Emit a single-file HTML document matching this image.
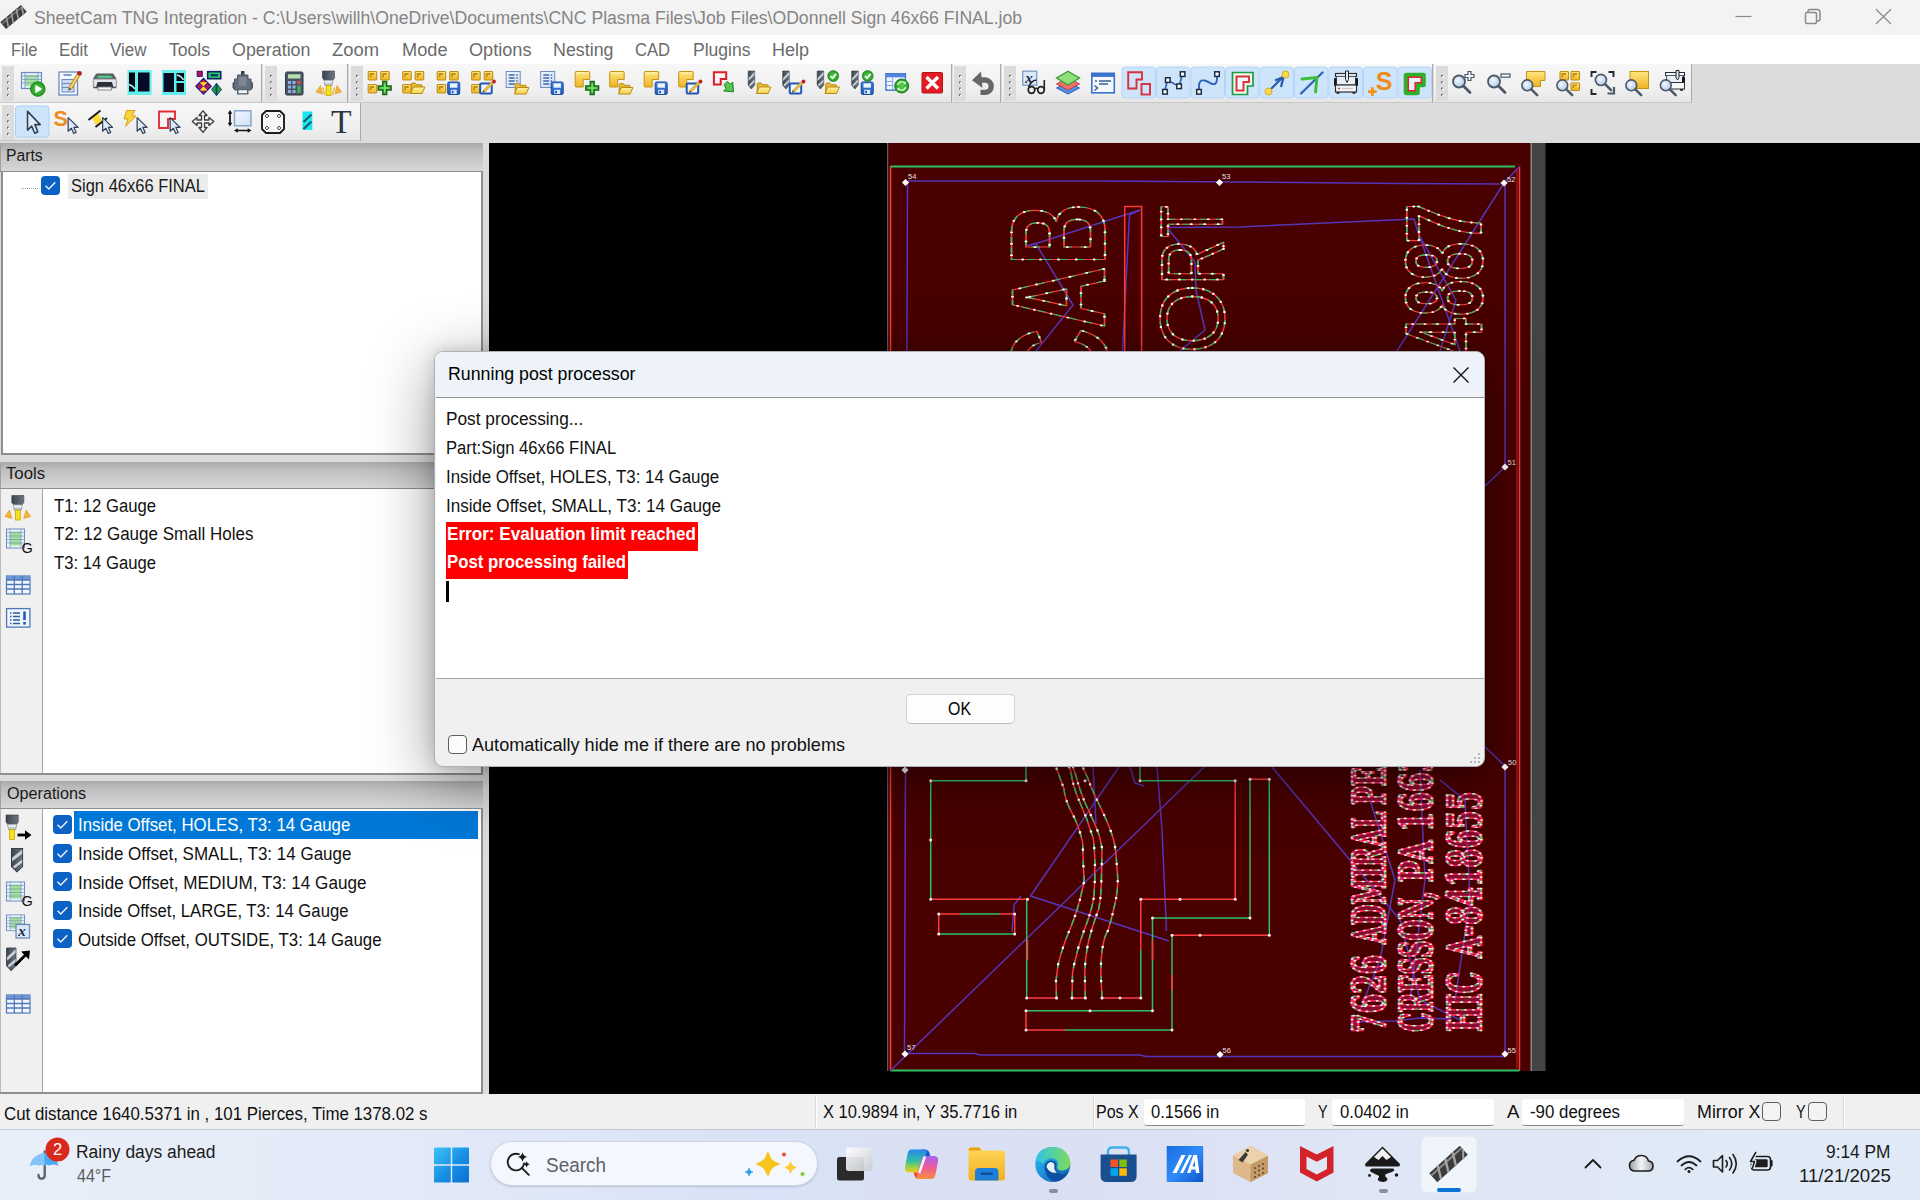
<!DOCTYPE html>
<html lang="en"><head><meta charset="utf-8"><title>SheetCam TNG Integration</title>
<style>
*{box-sizing:border-box;margin:0;padding:0}
html,body{width:1920px;height:1200px;overflow:hidden;background:#dcdcdc;font-family:"Liberation Sans",sans-serif;color:#111}
.abs{position:absolute}
.t{position:absolute;white-space:nowrap;line-height:1;transform-origin:0 0}
#titlebar{left:0;top:0;width:1920px;height:35px;background:#f3f3f3}
#menubar{left:0;top:35px;width:1920px;height:29px;background:#fff}
.tb{position:absolute;background:linear-gradient(#f7f7f7,#efefef 70%,#e6e6e6);border-right:1px solid #a9a9a9;border-bottom:1px solid #c9c9c9}
.ph{position:absolute;left:0;width:483px;background:linear-gradient(#aaaaaa,#bfbfbf 30%,#d7d7d7);border-left:1px solid #a0a0a0;border-bottom:1px solid #8e8e8e}
.pb{position:absolute;background:#fff;border:2px solid #8f8f8f;border-top:none}
.strip{position:absolute;left:0;width:43px;background:#f0f0f0;border-right:1px solid #a8a8a8;border-left:1px solid #bbb}
.cb{position:absolute;width:19px;height:19px;border-radius:4px;background:#0b62c4}
.cb svg{position:absolute;left:0;top:0}
</style></head><body>
<div id="titlebar" class="abs"></div>
<div id="menubar" class="abs"></div>
<!-- toolbar backgrounds -->
<div class="tb" style="left:0;top:64px;width:262px;height:39px"></div>
<div class="tb" style="left:263px;top:64px;width:85px;height:39px"></div>
<div class="tb" style="left:349px;top:64px;width:603px;height:39px"></div>
<div class="tb" style="left:953px;top:64px;width:48px;height:39px"></div>
<div class="tb" style="left:1002px;top:64px;width:431px;height:39px"></div>
<div class="tb" style="left:1434px;top:64px;width:258px;height:39px"></div>
<div class="tb" style="left:0;top:103px;width:361px;height:38px"></div>
<!-- window controls -->
<svg class="abs" style="left:1730px;top:0" width="190" height="35" viewBox="0 0 190 35" fill="none" stroke="#8a8a8a" stroke-width="1.2">
<path d="M5.500 16.500H21.500"/>
<rect x="75.500" y="12.500" width="11" height="11" rx="1.500" stroke-width="1.500"/><path d="M78 12.500V11.500A2 2 0 0 1 80 9.500H87A3 3 0 0 1 90 12.500V19A2 2 0 0 1 88 21H86.500" stroke-width="1.500"/>
<path d="M146 9.300L161 24M161 9.300L146 24"/>
</svg>
<!-- app icon -->
<svg class="abs" style="left:0;top:4px" width="28" height="27" viewBox="0 0 28 27">
<g transform="rotate(-40 13.500 13)"><rect x="0" y="8.500" width="27" height="9" fill="#3a3a3a"/><path d="M0 10.800h27" stroke="#7c7c7c" stroke-width="1.400"/><path d="M3 17.500l5-9M9.500 17.500l5-9M16 17.500l5-9M22.500 17.500l4-7" stroke="#9a9a9a" stroke-width="1.800"/></g>
</svg>
<!-- canvas -->
<div class="abs" style="left:489px;top:143px;width:1431px;height:951px;background:#000"></div>
<!-- Parts -->
<div class="ph" style="top:143px;height:29px"></div>
<div class="pb" style="left:1px;top:172px;width:481.500px;height:282.500px"></div>
<div class="abs" style="left:68px;top:174px;width:140px;height:25px;background:#ececec"></div>
<div class="abs" style="left:21px;top:188px;width:17px;height:1px;background:repeating-linear-gradient(90deg,#a0a0a0 0 1px,transparent 1px 2px)"></div>
<div class="cb" style="left:41px;top:176px"><svg width="19" height="19" viewBox="0 0 19 19"><path d="M4.500 9.800L7.800 13L14.300 6.300" fill="none" stroke="#e8f1fb" stroke-width="1.500"/></svg></div>
<!-- Tools -->
<div class="ph" style="top:462px;height:27px"></div>
<div class="pb" style="left:0;top:489px;width:482.500px;height:285.500px;border-left:none"></div>
<div class="strip" style="top:489px;height:284px"></div>
<!-- Operations -->
<div class="ph" style="top:781px;height:28px"></div>
<div class="pb" style="left:0;top:809px;width:482.500px;height:284.500px;border-left:none"></div>
<div class="strip" style="top:809px;height:283px"></div>
<div class="abs" style="left:74px;top:811px;width:404px;height:28px;background:#0078d7"></div>
<div class="cb" style="left:53px;top:815px"><svg width="19" height="19" viewBox="0 0 19 19"><path d="M4.500 9.800L7.800 13L14.300 6.300" fill="none" stroke="#e8f1fb" stroke-width="1.500"/></svg></div>
<div class="cb" style="left:53px;top:844px"><svg width="19" height="19" viewBox="0 0 19 19"><path d="M4.500 9.800L7.800 13L14.300 6.300" fill="none" stroke="#e8f1fb" stroke-width="1.500"/></svg></div>
<div class="cb" style="left:53px;top:872px"><svg width="19" height="19" viewBox="0 0 19 19"><path d="M4.500 9.800L7.800 13L14.300 6.300" fill="none" stroke="#e8f1fb" stroke-width="1.500"/></svg></div>
<div class="cb" style="left:53px;top:901px"><svg width="19" height="19" viewBox="0 0 19 19"><path d="M4.500 9.800L7.800 13L14.300 6.300" fill="none" stroke="#e8f1fb" stroke-width="1.500"/></svg></div>
<div class="cb" style="left:53px;top:929px"><svg width="19" height="19" viewBox="0 0 19 19"><path d="M4.500 9.800L7.800 13L14.300 6.300" fill="none" stroke="#e8f1fb" stroke-width="1.500"/></svg></div>
<!-- status bar -->
<div class="abs" style="left:0;top:1094px;width:1920px;height:35px;background:#f0f0f0"></div>
<div class="abs" style="left:816px;top:1096px;width:1px;height:31px;background:#fff;box-shadow:-1px 0 0 #d8d8d8"></div>
<div class="abs" style="left:1094px;top:1096px;width:1px;height:31px;background:#fff;box-shadow:-1px 0 0 #d8d8d8"></div>
<div class="abs" style="left:1844px;top:1096px;width:1px;height:31px;background:#fff;box-shadow:-1px 0 0 #d8d8d8"></div>
<div class="abs" style="left:1144px;top:1099px;width:161px;height:27px;background:#fff;border-bottom:1px solid #8a8a8a;border-radius:3px"></div>
<div class="abs" style="left:1332px;top:1099px;width:162px;height:27px;background:#fff;border-bottom:1px solid #8a8a8a;border-radius:3px"></div>
<div class="abs" style="left:1522px;top:1099px;width:162px;height:27px;background:#fff;border-bottom:1px solid #8a8a8a;border-radius:3px"></div>
<div class="abs" style="left:1762px;top:1102px;width:19px;height:19px;background:#f3f3f3;border:1px solid #5e5e5e;border-radius:4px"></div>
<div class="abs" style="left:1808px;top:1102px;width:19px;height:19px;background:#f3f3f3;border:1px solid #5e5e5e;border-radius:4px"></div>
<!-- taskbar -->
<div class="abs" style="left:0;top:1129px;width:1920px;height:71px;background:linear-gradient(90deg,#e9eff9 0%,#e2eaf8 22%,#d9e2f6 40%,#dbdff3 55%,#dfe6f5 72%,#e1ebf7 100%);border-top:1px solid #c3c9d3"></div>
<div class="abs" style="left:490px;top:1141px;width:328px;height:45px;border-radius:23px;background:#f4f7fd;border:1px solid #cfd6e4;box-shadow:0 1px 2px rgba(80,90,120,.25)"></div>
<div class="abs" style="left:1421px;top:1136px;width:56px;height:57px;border-radius:6px;background:#f0f4fb;border:1px solid #e6ebf4"></div>
<div class="abs" style="left:1437px;top:1188px;width:24px;height:4px;border-radius:2px;background:#0a74d4"></div>
<div class="abs" style="left:1048.500px;top:1188.500px;width:9px;height:4px;border-radius:2px;background:#8b8f97"></div>
<div class="abs" style="left:1378.500px;top:1188.500px;width:9px;height:4px;border-radius:2px;background:#8b8f97"></div>
<!-- CAD canvas -->
<svg class="abs" style="left:489px;top:143px" width="1431" height="951" viewBox="489 143 1431 951">
<defs>
<g id="mk"><path d="M-3.600 0L0 -3.600L3.600 0L0 3.600Z" fill="#fff"/></g>
</defs>
<rect x="887" y="143" width="644" height="928" fill="#480000"/>
<rect x="887" y="143" width="1.200" height="928" fill="#6a5a5a"/>
<rect x="1530.500" y="143" width="1.500" height="928" fill="#8a8484"/>
<rect x="1532" y="143" width="13.500" height="928" fill="#444"/>
<!-- outside contour -->
<g fill="none" stroke-width="1.500">
<path d="M890.500 166.500V1070.500" stroke="#ff3a3a"/>
<path d="M1519.500 166.500V1070.500" stroke="#ff3a3a"/>
<path d="M1517 170V1068" stroke="#c02828" stroke-width="1"/>
<path d="M890.500 166.500H1515" stroke="#2fbf63" stroke-width="1.800"/>
<path d="M890.500 1070.500H1519.500" stroke="#2fbf63" stroke-width="1.800"/>
</g>
<!-- rapids (blue) -->
<g fill="none" stroke="#5535b8" stroke-width="1.500" stroke-linejoin="round">
<path d="M907.500 181H1100L1240 182L1400 183.500L1500 184"/>
<path d="M907.500 181L904.500 1054"/>
<path d="M1505 184V467L1485 486"/>
<path d="M1485 747L1505 766V1054"/>
<path d="M905 1053.500H975L980 1055H1140L1146 1056.500H1505"/>
<path d="M1519.500 166.500L1504 183L1397 351"/>
<path d="M1167 227.500L1240 227L1414 219L1418 232L1460 351"/>
<path d="M1419 235L1456 300L1440 351"/>
<path d="M1140 210L1041 242L1028 245.500L1036 244L1073 305L1036 351"/>
<path d="M1140 210L1129.500 215L1122.500 351"/>
<path d="M1167 227.500L1195 262L1196 290L1205 330L1180 351"/>
<!-- bottom -->
<path d="M890.500 1070.500L1204 767"/>
<path d="M1030.500 896L1119 767"/>
<path d="M1030.500 896L1169 941"/>
<path d="M1157 767L1162 830L1166.500 931"/>
<path d="M1093 767L1096 824"/>
<path d="M1130 767L1135 783L1144 786"/>
<path d="M1272 767L1350 860L1400 920L1420 1000L1460 1020"/>
<path d="M1012 932L1014 905L1021 896"/>
<path d="M1355 1022L1395 1021L1420 1018L1452 1019"/>
<path d="M1370 800L1395 880L1380 960L1360 1010"/>
<path d="M1420 770L1425 880L1410 1000"/>
<path d="M1440 780L1465 800L1470 900L1455 1000"/>
</g>
<!-- logo shapes -->
<g fill="none" stroke-width="1.500" stroke-linejoin="round">
<g stroke="#2fbf63">
<path d="M1026 767V780.800H930.700V899.200"/>
<path d="M1026.700 899.200V998"/>
<path d="M1235.200 780.800H1140V767"/>
<path d="M938.700 934H1014.700"/>
<path d="M960 914H1000"/>
<path d="M1250 779.200V918H1152.500V1010.700H1026"/>
<path d="M1269.300 779.200V935.200"/>
<path d="M1172 935.200V1030H1065"/>
<path d="M1140.800 998V950"/>
</g>
<g stroke="#ff3a3a">
<path d="M930.700 899.200H1027.500"/>
<path d="M1026.700 998H1056.500M1072 998H1085.300M1102 998H1140.800"/>
<path d="M1140.800 950V899.200H1235.200V780.800"/>
<path d="M938.700 934V914H960M1000 914H1014.700V934"/>
<path d="M1250 779.200H1269.300"/>
<path d="M1269.300 935.200H1172"/>
<path d="M1065 1030H1026V1010.700"/>
<path d="M1027.500 940V960M1152.500 940V960M1172 975V990"/>
</g>
<!-- wavy curves -->
<defs><g id="waves">
<path id="w1" d="M1056.500 998L1056 981L1058 965Q1062 948 1070 929T1082 890.700Q1084.500 882 1084 877T1082.700 842.700Q1079 826 1072 813T1064 789L1056 767"/>
<path id="w2" d="M1072 998L1072.500 973L1074 965Q1078 946 1085 928T1094 896Q1095.500 875 1094.700 856T1092 834.700Q1087 818 1080 802.700T1070.700 770.700L1069 767"/>
<path id="w3" d="M1085.300 998L1084.800 973Q1085 958 1088 944T1098.700 909Q1100.500 900 1101 890.700T1102 848Q1100 836 1096 826.700T1085 802.700Q1079 788 1076 776L1073 767"/>
<path id="w4" d="M1102 998L1100.800 973Q1100.800 958 1102.700 946.700T1108 930.700Q1113 914 1116 898.700T1116.800 866.700Q1116.500 855 1114.700 845T1106.700 821Q1102 810 1097 800T1088 778.700L1082.700 767"/>
</g></defs>
<use href="#waves" stroke="#ff3a3a"/>
<use href="#waves" stroke="#2fbf63" stroke-dasharray="7 8"/>
<use href="#waves" stroke="#fff" stroke-width="2.600" stroke-linecap="round" stroke-dasharray="0 17"/>
</g>
<g fill="#ffe6f0"><circle cx="930.7" cy="780.8" r="1.500"/><circle cx="930.7" cy="899.2" r="1.500"/><circle cx="1027.5" cy="899.2" r="1.500"/><circle cx="1026.7" cy="998" r="1.500"/><circle cx="1056.5" cy="998" r="1.500"/><circle cx="1072" cy="998" r="1.500"/><circle cx="1085.3" cy="998" r="1.500"/><circle cx="1102" cy="998" r="1.500"/><circle cx="1140.8" cy="998" r="1.500"/><circle cx="1140.8" cy="899.2" r="1.500"/><circle cx="1235.2" cy="899.2" r="1.500"/><circle cx="1235.2" cy="780.8" r="1.500"/><circle cx="1140" cy="780.8" r="1.500"/><circle cx="1026" cy="780.8" r="1.500"/><circle cx="938.7" cy="914" r="1.500"/><circle cx="1014.7" cy="914" r="1.500"/><circle cx="1014.7" cy="934" r="1.500"/><circle cx="938.7" cy="934" r="1.500"/><circle cx="1250" cy="779.2" r="1.500"/><circle cx="1269.3" cy="779.2" r="1.500"/><circle cx="1269.3" cy="935.2" r="1.500"/><circle cx="1172" cy="935.2" r="1.500"/><circle cx="1172" cy="1030" r="1.500"/><circle cx="1026" cy="1030" r="1.500"/><circle cx="1026" cy="1010.7" r="1.500"/><circle cx="1152.5" cy="1010.7" r="1.500"/><circle cx="1152.5" cy="918" r="1.500"/><circle cx="1250" cy="918" r="1.500"/><circle cx="930.7" cy="840" r="1.500"/><circle cx="1120" cy="998" r="1.500"/><circle cx="1090" cy="1010.7" r="1.500"/><circle cx="1200" cy="935.2" r="1.500"/><circle cx="1085" cy="780.8" r="1.500"/><circle cx="1180" cy="899.2" r="1.500"/></g>
<!-- sign lettering (rotated text outlines) -->
<defs>
<g id="bigtxt" font-family="'Liberation Sans',sans-serif" font-weight="bold" font-size="100">
<text vector-effect="non-scaling-stroke" transform="translate(1105.0 260.0) rotate(-90) scale(0.8613 1.3478)" x="-6.00" y="0">B</text>
<text vector-effect="non-scaling-stroke" transform="translate(1105.0 326.6) rotate(-90) scale(0.8559 1.3286)" x="-2.00" y="0">A</text>
<text vector-effect="non-scaling-stroke" transform="translate(1106.5 388.0) rotate(-90) scale(0.8788 1.3714)" x="-4.00" y="0">C</text>
</g>
<g id="midtxt" font-family="'Liberation Sans',sans-serif" font-weight="normal" font-size="100">
<text vector-effect="non-scaling-stroke" transform="translate(1223.0 236.6) rotate(-90) scale(0.5263 0.8986)" x="-2.00" y="0">T</text>
<text vector-effect="non-scaling-stroke" transform="translate(1223.0 279.7) rotate(-90) scale(0.6283 0.8857)" x="-8.00" y="0">R</text>
<text vector-effect="non-scaling-stroke" transform="translate(1224.0 350.0) rotate(-90) scale(0.8986 0.9143)" x="-4.00" y="0">O</text>
<text vector-effect="non-scaling-stroke" transform="translate(1223.0 392.0) rotate(-90) scale(0.6667 0.8986)" x="-8.00" y="0">P</text>
</g>
<g id="numtxt" font-family="'Liberation Sans',sans-serif" font-weight="bold" font-size="100">
<text vector-effect="non-scaling-stroke" transform="translate(1481.0 240.9) rotate(-90) scale(0.7271 1.0714)" x="-4.00" y="0">7</text>
<text vector-effect="non-scaling-stroke" transform="translate(1482.0 278.5) rotate(-90) scale(0.6980 1.1000)" x="-3.00" y="0">8</text>
<text vector-effect="non-scaling-stroke" transform="translate(1482.0 314.2) rotate(-90) scale(0.6600 1.1000)" x="-3.00" y="0">8</text>
<text vector-effect="non-scaling-stroke" transform="translate(1481.0 352.0) rotate(-90) scale(0.6200 1.0870)" x="-1.00" y="0">4</text>
</g>
<g id="smalltxt" font-family="'DejaVu Serif','Liberation Serif',serif" font-weight="bold" font-size="100">
<text vector-effect="non-scaling-stroke" transform="translate(1385.0 1030.7) rotate(-90) scale(0.2800 0.4521)" x="-7.00" y="0">7626</text>
<text vector-effect="non-scaling-stroke" transform="translate(1385.0 944.0) rotate(-90) scale(0.2389 0.4521)" x="1.00" y="0">ADMIRAL</text>
<text vector-effect="non-scaling-stroke" transform="translate(1385.0 804.0) rotate(-90) scale(0.2487 0.4521)" x="-4.00" y="0">PEARY</text>
<text vector-effect="non-scaling-stroke" transform="translate(1432.0 1030.7) rotate(-90) scale(0.2394 0.4562)" x="-4.00" y="0">CRESSON,</text>
<text vector-effect="non-scaling-stroke" transform="translate(1432.0 881.0) rotate(-90) scale(0.2869 0.4562)" x="-4.00" y="0">PA</text>
<text vector-effect="non-scaling-stroke" transform="translate(1432.0 828.0) rotate(-90) scale(0.2837 0.4562)" x="-12.00" y="0">16630</text>
<text vector-effect="non-scaling-stroke" transform="translate(1481.0 1030.7) rotate(-90) scale(0.2718 0.4699)" x="-4.00" y="0">HIC</text>
<text vector-effect="non-scaling-stroke" transform="translate(1481.0 958.0) rotate(-90) scale(0.2747 0.4699)" x="1.00" y="0">A-8418655</text>
</g>
</defs>
<g fill="none" stroke-width="1.400" stroke-linejoin="round">
<g style="vector-effect:non-scaling-stroke">
<use href="#bigtxt" stroke="#ff3a3a"/><use href="#bigtxt" stroke="#2fbf63" stroke-dasharray="7 7"/><use href="#bigtxt" stroke="#fff" stroke-width="2.400" stroke-linecap="round" stroke-dasharray="0 15"/>
<use href="#midtxt" stroke="#ff3a3a"/><use href="#midtxt" stroke="#2fbf63" stroke-dasharray="6 7"/><use href="#midtxt" stroke="#fff" stroke-width="2.400" stroke-linecap="round" stroke-dasharray="0 11"/>
<use href="#numtxt" stroke="#ff3a3a"/><use href="#numtxt" stroke="#2fbf63" stroke-dasharray="6 7"/><use href="#numtxt" stroke="#fff" stroke-width="2.400" stroke-linecap="round" stroke-dasharray="0 10"/>
<use href="#smalltxt" stroke="#ee2268" stroke-width="1.900" fill="#c01a58" fill-opacity=".5"/><use href="#smalltxt" stroke="#ff3a3a" stroke-width="1.300" stroke-dasharray="5 6"/><use href="#smalltxt" stroke="#35c468" stroke-width="1.500" stroke-dasharray="4 13"/><use href="#smalltxt" stroke="#ffe2ee" stroke-width="2.300" stroke-linecap="round" stroke-dasharray="0 6.500"/>
</g>
</g>
<!-- divider bar -->
<path d="M1124.700 351V206.600H1141.600V351" fill="none" stroke="#ff3a3a" stroke-width="1.500"/>
<!-- pierce markers -->
<g font-family="'Liberation Sans',sans-serif" font-size="7.500" fill="#e8e0e0">
<use href="#mk" x="905.500" y="182.500"/><text x="908" y="179">54</text>
<use href="#mk" x="1219.500" y="182.500"/><text x="1222" y="179">53</text>
<use href="#mk" x="1504" y="183"/><text x="1507" y="182">52</text>
<use href="#mk" x="1505" y="467"/><text x="1507.500" y="465">51</text>
<use href="#mk" x="1505" y="767"/><text x="1508" y="765">50</text>
<use href="#mk" x="905" y="1054"/><text x="907" y="1050">57</text>
<use href="#mk" x="1220" y="1054.500"/><text x="1222.500" y="1053">56</text>
<use href="#mk" x="1505" y="1054"/><text x="1507.500" y="1052.500">55</text>
<use href="#mk" x="905" y="770"/>
</g>
</svg>
<!-- toolbar icons -->
<svg class="abs" style="left:0;top:0" width="1920" height="145" viewBox="0 0 1920 145">
<defs>
<linearGradient id="gy" x1="0" y1="0" x2="0" y2="1"><stop offset="0" stop-color="#ffe67e"/><stop offset="1" stop-color="#efb224"/></linearGradient>
<linearGradient id="gf" x1="0" y1="0" x2="0" y2="1"><stop offset="0" stop-color="#fff3a8"/><stop offset="1" stop-color="#f3cf48"/></linearGradient>
<linearGradient id="gb" x1="0" y1="0" x2="0" y2="1"><stop offset="0" stop-color="#3d7fe0"/><stop offset="1" stop-color="#1f57b5"/></linearGradient>
<linearGradient id="gl" x1="0" y1="0" x2="1" y2="1"><stop offset="0" stop-color="#f4f8ff"/><stop offset="1" stop-color="#cfe0f7"/></linearGradient>
<linearGradient id="gd" x1="0" y1="0" x2="1" y2="0"><stop offset="0" stop-color="#3d444e"/><stop offset="1" stop-color="#6c7682"/></linearGradient>
<radialGradient id="gg"><stop offset="0" stop-color="#5fd04f"/><stop offset="1" stop-color="#239a23"/></radialGradient>
<radialGradient id="gm" cx=".4" cy=".4"><stop offset="0" stop-color="#f4f9ff"/><stop offset="1" stop-color="#bcd3ee"/></radialGradient>
<g id="note"><rect x=".5" y=".5" width="8.500" height="8.500" rx=".9" fill="url(#gy)" stroke="#bf8f10" stroke-width="1.100"/><path d="M2.900 6.300V3h3.600" fill="none" stroke="#c08f14" stroke-width="1.800"/></g>
<g id="folder"><path d="M1.500 11V2.200Q1.500 1 2.700 1H5.500L7 2.800H11.500Q12.500 2.800 12.500 3.800V5" fill="#e7b93a" stroke="#b98a12"/><path d="M.8 11.500L3.600 5H15.200L12.400 11.500Z" fill="url(#gf)" stroke="#b98a12" stroke-linejoin="round"/></g>
<g id="floppy"><rect x=".5" y=".5" width="12" height="12.500" rx="1.500" fill="url(#gb)" stroke="#1a4a9c"/><rect x="2.800" y="1.800" width="7.400" height="4.400" fill="#eef5ff"/><rect x="3.500" y="8.200" width="6" height="4.300" fill="#dbe8fb"/><rect x="4.500" y="9.200" width="1.800" height="2.600" fill="#2a62c0"/></g>
<g id="pbox"><rect x="1" y="3" width="11.500" height="10" rx="1" fill="#f2f7ff" stroke="#1f57b5" stroke-width="2"/><path d="M4.500 11L14 1.500" stroke="#d9a52c" stroke-width="3"/><path d="M4.500 11L14 1.500" stroke="#f5d97a" stroke-width="1"/><circle cx="14.800" cy="1" r="1.900" fill="#c4202a"/><path d="M3.300 12.200l.6-2.400 1.800 1.800z" fill="#5b4526"/></g>
<g id="plus"><path d="M4.500 0h4v4.500H13v4H8.500V13h-4V8.500H0v-4h4.500z" fill="#3fae3a" stroke="#176a17" stroke-width="1.300"/><path d="M6.500 2v9M2 6.500h9" stroke="#7fe070" stroke-width="1.400"/></g>
<g id="drill"><path d="M0 0H6.500V14L3.200 18L0 14Z" fill="url(#gd)" stroke="#353b44" stroke-width=".6"/><path d="M6.300 1L.4 7V10L6.300 4ZM6.300 8.500L.8 13.800l1 1.600L6.300 11Z" fill="#c9d0d8"/></g>
<g id="chk"><circle cx="5.500" cy="5.500" r="5.500" fill="url(#gg)" stroke="#1c7d1c" stroke-width=".6"/><path d="M2.700 5.700L4.800 7.800L8.400 3.400" fill="none" stroke="#fff" stroke-width="1.700"/></g>
<g id="listdoc"><rect x=".5" y=".5" width="14" height="16" fill="url(#gl)" stroke="#6d8cbc"/><path d="M3 4h6M3 7h6M3 10h6M3 13h6" stroke="#3f67a8" stroke-width="1.500"/><path d="M10.500 4h1.500M10.500 7h1.500M10.500 10h1.500M10.500 13h1.500" stroke="#3f67a8" stroke-width="1.500"/></g>
<g id="bignote"><path d="M.5 1.500Q.5 .5 1.500 .5H14Q15 .5 15 1.500V8.500H8.500V16H1.500Q.5 16 .5 15Z" fill="url(#gy)" stroke="#c39414"/><path d="M1.500 2h12" stroke="#fff6c4" stroke-width="1"/></g>
<g id="mag"><circle cx="7" cy="7" r="6" fill="url(#gm)" stroke="#4d5966" stroke-width="1.800"/><path d="M11.500 11.500L18 18" stroke="#4d5966" stroke-width="2.800" stroke-linecap="round"/></g>
<g id="cur"><path d="M.7 .7V15.500L4.200 12.300L6.800 18L9.400 16.800L6.900 11.200H11.500Z" fill="#dfeaf7" stroke="#2c3e55" stroke-width="1.300" stroke-linejoin="round"/></g>
<g id="tbl"><rect x=".5" y=".5" width="18" height="19" fill="#eef4ff" stroke="#6d8cbc"/><rect x="4" y="3" width="11" height="14" fill="#9fe093"/><path d="M.5 4H18.500M.5 7.500H18.500M.5 11H18.500M.5 14.500H18.500M4 .5V19.500M15 .5V19.500" stroke="#7f9cc8" stroke-width=".8"/></g>
<g id="btbl"><rect x=".500" y=".5" width="23.500" height="18" fill="#f2f7ff" stroke="#4f78b8" stroke-width="1.200"/><rect x=".5" y=".5" width="23.500" height="4" fill="#6f97d6"/><path d="M.5 4.500H24M.5 9H24M.5 13.500H24M8.300 .5V18.500M16.200 .5V18.500" stroke="#4f78b8" stroke-width="1.300"/></g>
<g id="torch"><path d="M0 0H12V7L10.500 9H1.500L0 7Z" fill="url(#gd)" stroke="#353b44" stroke-width=".6"/><path d="M1.500 9H10.500L9.500 14.500H2.500Z" fill="#c5ccd4" stroke="#6c7682" stroke-width=".6"/><path d="M2.200 11h7.600" stroke="#f4f7fa" stroke-width="1.400"/><rect x="3.600" y="14.500" width="4.800" height="10" fill="#f7e21a" stroke="#c9a60a" stroke-width=".8"/></g>
</defs>
<rect x="2" y="66" width="12" height="35" fill="#dcdcdc"/><rect x="7" y="75.0" width="2" height="2" fill="#6a6a6a"/><rect x="8" y="76.0" width="1.500" height="1.500" fill="#fff"/><rect x="7" y="81.3" width="2" height="2" fill="#6a6a6a"/><rect x="8" y="82.3" width="1.500" height="1.500" fill="#fff"/><rect x="7" y="87.6" width="2" height="2" fill="#6a6a6a"/><rect x="8" y="88.6" width="1.500" height="1.500" fill="#fff"/><rect x="7" y="93.9" width="2" height="2" fill="#6a6a6a"/><rect x="8" y="94.9" width="1.500" height="1.500" fill="#fff"/>
<rect x="265" y="66" width="12" height="35" fill="#dcdcdc"/><rect x="270" y="75.0" width="2" height="2" fill="#6a6a6a"/><rect x="271" y="76.0" width="1.500" height="1.500" fill="#fff"/><rect x="270" y="81.3" width="2" height="2" fill="#6a6a6a"/><rect x="271" y="82.3" width="1.500" height="1.500" fill="#fff"/><rect x="270" y="87.6" width="2" height="2" fill="#6a6a6a"/><rect x="271" y="88.6" width="1.500" height="1.500" fill="#fff"/><rect x="270" y="93.9" width="2" height="2" fill="#6a6a6a"/><rect x="271" y="94.9" width="1.500" height="1.500" fill="#fff"/>
<rect x="351" y="66" width="12" height="35" fill="#dcdcdc"/><rect x="356" y="75.0" width="2" height="2" fill="#6a6a6a"/><rect x="357" y="76.0" width="1.500" height="1.500" fill="#fff"/><rect x="356" y="81.3" width="2" height="2" fill="#6a6a6a"/><rect x="357" y="82.3" width="1.500" height="1.500" fill="#fff"/><rect x="356" y="87.6" width="2" height="2" fill="#6a6a6a"/><rect x="357" y="88.6" width="1.500" height="1.500" fill="#fff"/><rect x="356" y="93.9" width="2" height="2" fill="#6a6a6a"/><rect x="357" y="94.9" width="1.500" height="1.500" fill="#fff"/>
<rect x="954" y="66" width="12" height="35" fill="#dcdcdc"/><rect x="959" y="75.0" width="2" height="2" fill="#6a6a6a"/><rect x="960" y="76.0" width="1.500" height="1.500" fill="#fff"/><rect x="959" y="81.3" width="2" height="2" fill="#6a6a6a"/><rect x="960" y="82.3" width="1.500" height="1.500" fill="#fff"/><rect x="959" y="87.6" width="2" height="2" fill="#6a6a6a"/><rect x="960" y="88.6" width="1.500" height="1.500" fill="#fff"/><rect x="959" y="93.9" width="2" height="2" fill="#6a6a6a"/><rect x="960" y="94.9" width="1.500" height="1.500" fill="#fff"/>
<rect x="1004" y="66" width="12" height="35" fill="#dcdcdc"/><rect x="1009" y="75.0" width="2" height="2" fill="#6a6a6a"/><rect x="1010" y="76.0" width="1.500" height="1.500" fill="#fff"/><rect x="1009" y="81.3" width="2" height="2" fill="#6a6a6a"/><rect x="1010" y="82.3" width="1.500" height="1.500" fill="#fff"/><rect x="1009" y="87.6" width="2" height="2" fill="#6a6a6a"/><rect x="1010" y="88.6" width="1.500" height="1.500" fill="#fff"/><rect x="1009" y="93.9" width="2" height="2" fill="#6a6a6a"/><rect x="1010" y="94.9" width="1.500" height="1.500" fill="#fff"/>
<rect x="1436" y="66" width="12" height="35" fill="#dcdcdc"/><rect x="1441" y="75.0" width="2" height="2" fill="#6a6a6a"/><rect x="1442" y="76.0" width="1.500" height="1.500" fill="#fff"/><rect x="1441" y="81.3" width="2" height="2" fill="#6a6a6a"/><rect x="1442" y="82.3" width="1.500" height="1.500" fill="#fff"/><rect x="1441" y="87.6" width="2" height="2" fill="#6a6a6a"/><rect x="1442" y="88.6" width="1.500" height="1.500" fill="#fff"/><rect x="1441" y="93.9" width="2" height="2" fill="#6a6a6a"/><rect x="1442" y="94.9" width="1.500" height="1.500" fill="#fff"/>
<rect x="2" y="105" width="12" height="35" fill="#dcdcdc"/><rect x="7" y="114.0" width="2" height="2" fill="#6a6a6a"/><rect x="8" y="115.0" width="1.500" height="1.500" fill="#fff"/><rect x="7" y="120.3" width="2" height="2" fill="#6a6a6a"/><rect x="8" y="121.3" width="1.500" height="1.500" fill="#fff"/><rect x="7" y="126.6" width="2" height="2" fill="#6a6a6a"/><rect x="8" y="127.6" width="1.500" height="1.500" fill="#fff"/><rect x="7" y="132.9" width="2" height="2" fill="#6a6a6a"/><rect x="8" y="133.9" width="1.500" height="1.500" fill="#fff"/>
<rect x="1122.0" y="67" width="33.500" height="31" rx="3" fill="#cde4fb" stroke="#b3d6f8"/>
<rect x="1156.5" y="67" width="33.500" height="31" rx="3" fill="#cde4fb" stroke="#b3d6f8"/>
<rect x="1191.0" y="67" width="33.500" height="31" rx="3" fill="#cde4fb" stroke="#b3d6f8"/>
<rect x="1225.5" y="67" width="33.500" height="31" rx="3" fill="#cde4fb" stroke="#b3d6f8"/>
<rect x="1260.0" y="67" width="33.500" height="31" rx="3" fill="#cde4fb" stroke="#b3d6f8"/>
<rect x="1294.5" y="67" width="33.500" height="31" rx="3" fill="#cde4fb" stroke="#b3d6f8"/>
<rect x="1329.0" y="67" width="33.500" height="31" rx="3" fill="#cde4fb" stroke="#b3d6f8"/>
<rect x="1363.5" y="67" width="33.500" height="31" rx="3" fill="#cde4fb" stroke="#b3d6f8"/>
<rect x="1398.0" y="67" width="33.500" height="31" rx="3" fill="#cde4fb" stroke="#b3d6f8"/>
<rect x="15.500" y="106" width="33.500" height="31" rx="3" fill="#cde4fb" stroke="#a9d1f7"/>
<g transform="translate(21 72)"><rect x=".5" y=".5" width="20" height="16" fill="#eaf1fd" stroke="#6d8cbc" stroke-width="1.200"/><rect x="4" y="3" width="13" height="11" fill="#a6e29b"/><path d="M.5 4H20.500M.5 7.500H20.500M.5 11H20.500M4 .5V16.500M17 .5V16.500" stroke="#7f9cc8" stroke-width=".9"/><circle cx="16.800" cy="17" r="7.300" fill="url(#gg)" stroke="#1f8a1f"/><path d="M14.300 12.800V21.200L21.300 17Z" fill="#fff"/></g>
<g transform="translate(58.5 71.5)"><rect x=".5" y=".5" width="18.500" height="23" fill="#f3f7fe" stroke="#6d8cbc" stroke-width="1.300"/><path d="M5 3.500h8" stroke="#5577ad" stroke-width="1.400"/><rect x="3.500" y="8" width="12" height="12.500" fill="#c9dcf5" stroke="#6d8cbc"/><path d="M3.500 12h12M3.500 16h12" stroke="#6d8cbc"/><path d="M11.500 17L20.500 2.500" stroke="#c9962a" stroke-width="4.200"/><path d="M11.500 17L20.500 2.500" stroke="#f3d26a" stroke-width="2"/><circle cx="21" cy="1.800" r="2.400" fill="#b8202a"/><path d="M9.800 19.300l.5-3.200 2.600 1.600z" fill="#5b4526"/></g>
<g transform="translate(92.5 73.5)"><path d="M4 .5H20.500L23.500 5.500H1Z" fill="#5a6a64" stroke="#4a5550"/><path d="M6 2.200H18.500L19.800 4.300H4.800Z" fill="#4fd08a"/><rect x=".8" y="5.500" width="23" height="8.500" rx="1.500" fill="#e2e5e8" stroke="#8a9097"/><path d="M5 8.500H19.500L21 14H3.500Z" fill="#2b3036"/><path d="M.8 14H23.800" stroke="#50565d" stroke-width="1.500"/><rect x="5.500" y="13.500" width="13.500" height="3" fill="#f8f8f8" stroke="#6a7077" stroke-width=".8"/></g>
<g transform="translate(127.5 70)"><rect x="0" y="0" width="24" height="25" fill="#5ff0ee"/><rect x="1.500" y="2.500" width="6" height="19" fill="#04060f"/><rect x="10.500" y="2.500" width="11.500" height="19" fill="#060a24"/><path d="M1.500 14.500Q5 15.500 7.500 19" fill="none" stroke="#bff8f6" stroke-width="1.600"/></g>
<g transform="translate(162 70)"><rect x="0" y="0" width="24" height="25" fill="#5ff0ee"/><rect x="1.500" y="3" width="10.500" height="19" fill="#060a24"/><rect x="14.500" y="3" width="7.500" height="8" fill="#04060f"/><rect x="14.500" y="13" width="7.500" height="9" fill="#04060f"/><path d="M15 5Q19.500 6 21.500 10" fill="none" stroke="#bff8f6" stroke-width="1.600"/></g>
<g transform="translate(196 70.5)"><rect x="1.200" y=".8" width="5" height="5" fill="#b01070" stroke="#3a0a5a"/><rect x="11.700" y="1.200" width="13" height="7" fill="#27d35a" stroke="#10206a" stroke-width="1.600"/><rect x="14.500" y="3.500" width="7.500" height="2.400" fill="#12307a"/><path d="M7.500 8L15 15.800L7.500 23.500L0 15.800Z" fill="#f01822" stroke="#1a1a8a" stroke-width="1.400"/><path d="M7.500 15.800L3.500 11.700H11.500ZM7.500 15.800L3.500 19.900H11.500Z" fill="#ffe42a"/><path d="M7.500 15.800L3.500 11.700V19.900ZM7.500 15.800L11.500 11.700V19.900Z" fill="#2a2ac0" opacity=".55"/><path d="M20.500 13L25.500 19L20.500 25L15.500 19Z" fill="#1f9a44" stroke="#0a4a6a"/><path d="M20.500 13V25" stroke="#0d3a7a" stroke-width="1.600"/></g>
<g transform="translate(233.5 71)"><rect x="7.500" y="0" width="3.500" height="4" fill="#3a424c"/><path d="M4 4H14.500V8H17.500V19H1V8H4Z" fill="#66717e" stroke="#4d5763"/><path d="M1 10.500L-.5 12V17L1 18.500M17.500 10.500L19 12V17L17.500 18.500" fill="#56606c" stroke="#4d5763"/><rect x="5.500" y="6" width="7.500" height="9" fill="#7d8894"/><rect x="3.500" y="19" width="11.500" height="4.500" fill="#56606c"/><rect x="5" y="19.200" width="8.500" height="3" fill="#f1f3f5"/></g>
<g transform="translate(285 71.5)"><rect x=".5" y=".5" width="17.500" height="23" rx="1.500" fill="#4b5563" stroke="#2f3742"/><rect x="3" y="2.800" width="12.500" height="4.200" fill="#b9e2b0"/><g fill="#8fb2e6"><rect x="3" y="9.500" width="3" height="3"/><rect x="7.500" y="9.500" width="3" height="3"/><rect x="3" y="14" width="3" height="3"/><rect x="7.500" y="14" width="3" height="3"/><rect x="3" y="18.500" width="3" height="3"/><rect x="7.500" y="18.500" width="3" height="3"/></g><rect x="12.300" y="9.500" width="3.200" height="3" fill="#e0484a"/><rect x="12.300" y="14" width="3.200" height="7.500" fill="#3fb55a"/></g>
<g transform="translate(316 71)"><use href="#torch" x="6.500" y="0"/><path d="M0 21L4.500 14.500L6.500 23Z" fill="#f2b632" stroke="#d9952a" stroke-width=".6"/><path d="M25.500 21L21 14.500L19 23Z" fill="#f2b632" stroke="#d9952a" stroke-width=".6"/><path d="M6.800 16.500L8.800 24M18.500 16.500L16.500 24" stroke="#f2b632" stroke-width="1.400"/></g>
<g transform="translate(367.7 71)"><use href="#note" x="0" y="0"/><use href="#note" x="12.500" y="0"/><use href="#note" x="0" y="13"/><use href="#plus" x="10.500" y="10.500"/></g>
<g transform="translate(402.2 71)"><use href="#note" x="0" y="0"/><use href="#note" x="12.500" y="0"/><use href="#note" x="0" y="13"/><use href="#folder" x="7.500" y="11"/></g>
<g transform="translate(436.7 71)"><use href="#note" x="0" y="0"/><use href="#note" x="12.500" y="0"/><use href="#note" x="0" y="13"/><use href="#floppy" x="10.500" y="10.500"/></g>
<g transform="translate(471.2 71)"><use href="#note" x="0" y="0"/><use href="#note" x="12.500" y="0"/><use href="#note" x="0" y="13"/><use href="#pbox" x="8" y="9.500"/></g>
<g transform="translate(505.7 71)"><use href="#listdoc" x="0" y="0"/><use href="#folder" x="8" y="11.500"/></g>
<g transform="translate(540.2 71)"><use href="#listdoc" x="0" y="0"/><use href="#floppy" x="10.500" y="10.500"/></g>
<g transform="translate(574.7 71)"><use href="#bignote" x="0" y="0"/><use href="#plus" x="11" y="10.500"/></g>
<g transform="translate(609.2 71)"><use href="#bignote" x="0" y="0"/><use href="#folder" x="8.500" y="11.500"/></g>
<g transform="translate(643.7 71)"><use href="#bignote" x="0" y="0"/><use href="#floppy" x="11" y="10.500"/></g>
<g transform="translate(678.2 71)"><use href="#bignote" x="0" y="0"/><use href="#pbox" x="7.500" y="9.500"/></g>
<g transform="translate(712.7 71)"><path d="M1.200 1.200H13.500V8H8V13.500H1.200Z" fill="#fdf4f4" stroke="#d8202c" stroke-width="2"/><path d="M11.500 13.500l3.200-3.200 3 3 2.300-2.300.8 9.800-9.800-.8 2.300-2.300z" fill="#56c84e" stroke="#1c7d1c"/></g>
<g transform="translate(747.2 71)"><use href="#drill" x="1" y="0"/><use href="#folder" x="8.500" y="11"/></g>
<g transform="translate(781.7 71)"><use href="#drill" x="1" y="0"/><use href="#pbox" x="7" y="9.500"/></g>
<g transform="translate(816.2 71)"><use href="#drill" x="1" y="0"/><use href="#chk" x="11.500" y="-.5"/><use href="#folder" x="8" y="11"/></g>
<g transform="translate(850.7 71)"><use href="#drill" x="1" y="0"/><use href="#chk" x="11.500" y="-.5"/><use href="#floppy" x="10" y="10.500"/></g>
<g transform="translate(885.2 71)"><rect x=".7" y="2.700" width="19.500" height="16.500" fill="#eef4ff" stroke="#3f74cc" stroke-width="1.400"/><rect x=".7" y="2.700" width="19.500" height="3.600" fill="#4f86de"/><path d="M7.500 6.500V19M.7 10.500H7.500M.7 14.500H7.500" stroke="#7fa2dc"/><circle cx="16.500" cy="15" r="7" fill="url(#gg)" stroke="#1c7d1c"/><path d="M12.500 14A4.200 4.200 0 0 1 20 12.500M20.500 16A4.200 4.200 0 0 1 13 17.500" fill="none" stroke="#c8f2c0" stroke-width="1.700"/><path d="M20.800 10.300v3h-3zM12.200 19.700v-3h3z" fill="#c8f2c0"/></g>
<g transform="translate(921.5 72)"><rect x=".5" y=".5" width="20.500" height="20.500" rx="1" fill="#e31b23" stroke="#b51218"/><path d="M5 5L16.500 16.500M16.500 5L5 16.500" stroke="#fff" stroke-width="3.400"/></g>
<g transform="translate(972 71.5)"><path d="M6 8.500H13A6.200 6.200 0 0 1 13 20.900H8.500" fill="none" stroke="#676767" stroke-width="5.400"/><path d="M0 8.800L9 0L10.500 16.500Z" fill="#676767"/></g>
<g transform="translate(1022 70.5)"><rect x=".7" y=".7" width="14" height="14" fill="#dbe8f8" stroke="#7d9cc8" stroke-width="1.300"/><text x="3.200" y="12" font-family="'Liberation Serif',serif" font-style="italic" font-weight="bold" font-size="15" fill="#1c2a44">x</text><circle cx="9.500" cy="19.500" r="3.300" fill="none" stroke="#222" stroke-width="1.700"/><circle cx="19" cy="19.500" r="3.300" fill="none" stroke="#222" stroke-width="1.700"/><path d="M12.500 18.500Q14.200 17 16 18.500M22.300 19V9.500M6.500 17Q9 10 14.500 9.500" fill="none" stroke="#222" stroke-width="1.600"/></g>
<g transform="translate(1056 70.5)"><path d="M12 11.500L23.500 17.500L12 23.500L.5 17.500Z" fill="#4f8fe6" stroke="#2f63b8"/><path d="M12 7.500L23.500 13.500L12 19.500L.5 13.500Z" fill="#f0706a" stroke="#c0403c"/><path d="M12 .8L23.500 7.500L12 14.500L.5 7.500Z" fill="#8fe07a" stroke="#3a9a34" stroke-width="1.300"/></g>
<g transform="translate(1091 72.5)"><rect x=".8" y=".8" width="22.500" height="19.500" fill="#f3f8ff" stroke="#3a72cc" stroke-width="1.600"/><rect x=".8" y=".8" width="22.500" height="3.600" fill="#3a72cc"/><path d="M4 8.500h2M8 8.500h12M8 11.500h9" stroke="#3f5f8f" stroke-width="1.400"/><path d="M3.500 13l3 2.500-3 2.500" fill="none" stroke="#3f5f8f" stroke-width="1.500"/></g>
<g transform="translate(1127 71)"><path d="M1.200 1.200H15V8.500H9.500V17.500H1.200Z" fill="none" stroke="#d8303c" stroke-width="1.900"/><rect x="14.500" y="13" width="8.500" height="10.500" fill="none" stroke="#d8303c" stroke-width="1.900"/></g>
<g transform="translate(1162 71)"><path d="M2.500 21L5.500 9L17 15.500L20.500 3" fill="none" stroke="#2f63b8" stroke-width="1.700"/><g fill="#fff" stroke="#1d2b40" stroke-width="1.500"><rect x=".7" y="18.500" width="4.600" height="4.600"/><rect x="3.500" y="6.800" width="4.600" height="4.600"/><rect x="14.800" y="13" width="4.600" height="4.600"/><rect x="18.300" y=".8" width="4.600" height="4.600"/></g></g>
<g transform="translate(1196 71)"><path d="M3 21V15Q3 8.500 8.500 9.500Q12 10.500 15 12.500Q21 15 21 8V3" fill="none" stroke="#2f63b8" stroke-width="1.900"/><g fill="#fff" stroke="#1d2b40" stroke-width="1.500"><rect x=".7" y="18.500" width="4.600" height="4.600"/><rect x="18.700" y=".8" width="4.600" height="4.600"/></g></g>
<g transform="translate(1231.5 71.5)"><path d="M1 1H21.500V14.500H16V23H1Z" fill="#eef8ee" stroke="#1f9a44" stroke-width="1.700"/><path d="M5 5H17.500V10.500H12V19H5Z" fill="#f3f6fc" stroke="#d8303c" stroke-width="1.900"/></g>
<g transform="translate(1264.5 70.5)"><path d="M5 20L20.500 4.500" stroke="#2558a8" stroke-width="2"/><path d="M10.500 10L19 6.500L16.500 16.500" fill="none" stroke="#2558a8" stroke-width="2.200"/><circle cx="4" cy="21" r="3.500" fill="#fbd84a" stroke="#d9a82a"/><circle cx="21" cy="4" r="3.500" fill="#fbd84a" stroke="#d9a82a"/></g>
<g transform="translate(1299.5 71)"><path d="M1.500 22.500L23 1.500" stroke="#2f63b8" stroke-width="2.300" stroke-linecap="round"/><path d="M2.500 8L17.500 6.500L16 21" fill="none" stroke="#3bbf3b" stroke-width="2.900" stroke-linecap="round" stroke-linejoin="round"/></g>
<g transform="translate(1334 71)"><rect x="1.500" y="2.500" width="21" height="3" fill="#f4f4f4" stroke="#2a2f36" stroke-width="1.200"/><rect x="2.500" y="5.500" width="19" height="8.500" fill="#e9eff7" stroke="#4d5966"/><rect x="0" y="7" width="2.600" height="8" rx="1" fill="#14171c"/><rect x="21.400" y="7" width="2.600" height="8" rx="1" fill="#14171c"/><rect x="1.500" y="14" width="21" height="7" fill="#f6f6f6" stroke="#2a2f36" stroke-width="1.200"/><path d="M4 17.500h2" stroke="#d03030" stroke-width="1.400"/><path d="M8 17.500h11" stroke="#c8ccd2" stroke-width="1.400"/><rect x="2.500" y="21" width="3" height="1.800" fill="#2a2f36"/><rect x="18.500" y="21" width="3" height="1.800" fill="#2a2f36"/><path d="M11.500 0h3v8.500l-1.500 3-1.500-3z" fill="#dfe6ee" stroke="#1f252c"/></g>
<g transform="translate(1368 70.5)"><text x="7.800" y="19" font-family="'Liberation Sans',sans-serif" font-weight="bold" font-size="25" fill="#ef8b1d">S</text><path d="M3 16.800h2.800v3h3v2.800h-3v3h-2.800v-3h-3v-2.800h3z" fill="#f2951c"/></g>
<g transform="translate(1403.5 72.5)"><path d="M2.500 2.500H20V12.500H14V20.500H2.500Z" fill="#eef4fc" stroke="#2eb02e" stroke-width="4.600" stroke-linejoin="round"/><path d="M4.800 4.800H17.700V10.200H11.700V18.200H4.800Z" fill="#eaf2fc" stroke="#e8242c" stroke-width="1.500"/></g>
<g transform="translate(1452 74.5)"><use href="#mag"/><path d="M16 -3h3v3h3v3h-3v3h-3v-3h-3v-3h3z" fill="#f3f7fc" stroke="#4d5966" stroke-width="1.200"/></g>
<g transform="translate(1487 74.5)"><use href="#mag"/><rect x="14" y="-.5" width="9" height="3.200" fill="#f3f7fc" stroke="#4d5966" stroke-width="1.200"/></g>
<g transform="translate(1521 71)"><path d="M5.500 .5H24V9.500H19.500V15.500H5.500Z" fill="url(#gy)" stroke="#c39414"/><g transform="translate(0 8) scale(.9)"><use href="#mag"/></g></g>
<g transform="translate(1556 71)"><use href="#note" x="3.500" y="0"/><use href="#note" x="14.500" y="0"/><g transform="translate(14.500 11.500) scale(1 .9)"><use href="#note"/></g><g transform="translate(0 8) scale(.9)"><use href="#mag"/></g></g>
<g transform="translate(1590.5 71)"><path d="M1 6V1H6M18 1H23V6M1 18V23H6" fill="none" stroke="#222a33" stroke-width="1.900"/><g transform="translate(4 2.500) scale(.92)"><use href="#mag"/></g><path d="M17 22.500H23.500V16" fill="none" stroke="#4d5966" stroke-width="2.200"/></g>
<g transform="translate(1625 71)"><rect x="5" y=".5" width="18.500" height="17" fill="url(#gy)" stroke="#c39414"/><g transform="translate(0 8) scale(.9)"><use href="#mag"/></g></g>
<g transform="translate(1659.5 70.5)"><rect x="6" y="2" width="19" height="3" fill="#f4f4f4" stroke="#2a2f36"/><rect x="7" y="5" width="17" height="7" fill="#e9eff7" stroke="#4d5966"/><rect x="22.500" y="6" width="3" height="8" rx="1" fill="#14171c"/><rect x="9" y="12" width="16" height="6.500" fill="#f6f6f6" stroke="#2a2f36"/><rect x="20.500" y="18.500" width="3" height="1.800" fill="#2a2f36"/><path d="M16.500 0h3v7l-1.500 2.500-1.500-2.500z" fill="#dfe6ee" stroke="#1f252c"/><g transform="translate(0 8.500) scale(.9)"><use href="#mag"/></g></g>
<g transform="translate(26.7 110.4)"><g transform="scale(1.18 1.27)"><use href="#cur"/></g></g>
<g transform="translate(53.5 110)"><text x="0" y="15.500" font-family="'Liberation Sans',sans-serif" font-weight="bold" font-size="21.500" fill="#ef8b1d">S</text><g transform="translate(14 7) scale(.92)"><use href="#cur"/></g></g>
<g transform="translate(88 109.5)"><path d="M3.500 7.500L10 3.500L14.500 11.500L8 15.500Z" fill="#fbdc3a"/><path d="M.5 10.500L12.500 1M7.500 17.500L19 8.500" stroke="#1c1c1c" stroke-width="2"/><g transform="translate(14 7.500) scale(.92)"><use href="#cur"/></g></g>
<g transform="translate(122.5 109.5)"><path d="M4 1H12.500L9.500 6.500H13.500L3 17L5.500 9.500H1.500Z" fill="#fbd23a" stroke="#d9a21a"/><g transform="translate(14 7.500) scale(.92)"><use href="#cur"/></g></g>
<g transform="translate(158 110.5)"><path d="M1 1H17V8.500H10V17.500H1Z" fill="#fbf3f3" stroke="#e0303a" stroke-width="1.900"/><g transform="translate(11.500 6.500) scale(.92)"><use href="#cur"/></g></g>
<g transform="translate(191.5 110)"><path d="M11.500 .8L15.500 5.500H13V10H17.500V7.500L22.300 11.500L17.500 15.500V13H13V17.500H15.500L11.500 22.300L7.500 17.500H10V13H5.500V15.500L.8 11.500L5.500 7.500V10H10V5.500H7.500Z" fill="#f4f4f4" stroke="#3c3c3c" stroke-width="1.300" stroke-linejoin="round"/></g>
<g transform="translate(227.5 110)"><rect x="7" y=".8" width="16.500" height="15" fill="url(#gl)" stroke="#8aa6cc" stroke-width="1.500"/><path d="M2.500 2.500V14M9 20.500H22" stroke="#111" stroke-width="1.700"/><path d="M2.500 0L4.800 3.800H.2ZM2.500 16.500L4.800 12.700H.2ZM6.500 20.500L10.300 18.200V22.800ZM24 20.500L20.200 18.200V22.800Z" fill="#111"/></g>
<g transform="translate(261 110)"><path d="M5 1H19L23 5V19L19 23H5L1 19V5Z" fill="#f6f6f6" stroke="#1c1c1c" stroke-width="1.900" stroke-linejoin="round"/><g fill="#dcdcdc" stroke="#444" stroke-width=".9"><path d="M6 4L8 6L6 8L4 6Z"/><path d="M18 4L20 6L18 8L16 6Z"/><path d="M6 16L8 18L6 20L4 18Z"/><path d="M18 16L20 18L18 20L16 18Z"/></g></g>
<g transform="translate(302.5 111.5)"><rect x="0" y="0" width="9.800" height="18.500" fill="#18e8ee"/><path d="M1 10.500L9 3M1 17.500L9 10" stroke="#1f5a6a" stroke-width="2.200"/></g>
<g transform="translate(331 110)"><text x="0" y="22.500" font-family="'Liberation Serif',serif" font-size="33" fill="#2c3640" transform="scale(1.02 1)">T</text></g>
</svg>
<!-- strip icons -->
<svg class="abs" style="left:0;top:0;overflow:visible" width="45" height="1100" viewBox="0 0 45 1100">
<g transform="translate(5 495.5)"><use href="#torch" x="6.800" y="0"/><path d="M0 21L4.500 14.500L7 23Z" fill="#f2b632" stroke="#d9952a" stroke-width=".6"/><path d="M25.600 21L21.100 14.500L18.600 23Z" fill="#f2b632" stroke="#d9952a" stroke-width=".6"/></g>
<g transform="translate(6 528.5)"><use href="#tbl"/><text x="15.500" y="24.300" font-family="'Liberation Sans',sans-serif" font-size="14.500" fill="#111">G</text></g>
<g transform="translate(6 575.5)"><use href="#btbl"/></g>
<g transform="translate(6 608)"><rect x=".6" y=".6" width="23.300" height="18.500" fill="#f2f7ff" stroke="#4f78b8" stroke-width="1.300"/><path d="M4 5h1.500M7 5h7M4 8.500h1.500M7 8.500h7M4 12h1.500M7 12h7M4 15.500h1.500M7 15.500h7" stroke="#2f5a9f" stroke-width="1.400"/><path d="M18.500 3.500V12" stroke="#1f57c8" stroke-width="2.600"/><rect x="17.200" y="14" width="2.600" height="2.600" fill="#1f57c8"/></g>
<g transform="translate(6 815)"><g transform="scale(1.02 1)"><use href="#torch"/></g><path d="M11.500 20H21" stroke="#000" stroke-width="2.800"/><path d="M25.500 20L19 15.300V24.700Z" fill="#000"/></g>
<g transform="translate(11.5 848.5)"><g transform="scale(1.7 1.3)"><use href="#drill"/></g></g>
<g transform="translate(6 881.5)"><use href="#tbl"/><text x="15.500" y="24.300" font-family="'Liberation Sans',sans-serif" font-size="14.500" fill="#111">G</text></g>
<g transform="translate(6 914.5)"><g transform="scale(1 .83)"><use href="#tbl"/></g><rect x="10" y="10" width="13.500" height="13.500" fill="#dbe8f8" stroke="#6d8cbc" stroke-width="1.300"/><text x="12.200" y="21.500" font-family="'Liberation Serif',serif" font-style="italic" font-weight="bold" font-size="15" fill="#1c2a44">x</text></g>
<g transform="translate(6.5 948)"><g transform="scale(1.45 1.27)"><use href="#drill"/></g><path d="M8.500 17.500L19 7" stroke="#000" stroke-width="2.800"/><path d="M23.500 2.500L22.500 11.500L14.500 3.500Z" fill="#000"/></g>
<g transform="translate(6 994.5)"><use href="#btbl"/></g>
</svg>
<!-- taskbar icons -->
<svg class="abs" style="left:0;top:1130px" width="1920" height="70" viewBox="0 1130 1920 70">
<defs>
<linearGradient id="tkw1" gradientUnits="userSpaceOnUse" x1="434" y1="1147" x2="469" y2="1182"><stop offset="0" stop-color="#3fc4f6"/><stop offset=".5" stop-color="#1a93e6"/><stop offset="1" stop-color="#0c6fd2"/></linearGradient>
<linearGradient id="fo1" x1="0" y1="0" x2="0" y2="1"><stop offset="0" stop-color="#ffd75a"/><stop offset="1" stop-color="#f2b01e"/></linearGradient>
<linearGradient id="ed1" x1="0" y1="0" x2="1" y2="1"><stop offset="0" stop-color="#35c1f1"/><stop offset=".5" stop-color="#1b8fd8"/><stop offset="1" stop-color="#0c59a4"/></linearGradient>
<linearGradient id="ed2" x1="0" y1="0" x2="1" y2="0"><stop offset="0" stop-color="#2fc3e8"/><stop offset="1" stop-color="#7ddc5a"/></linearGradient>
<linearGradient id="cpl" x1="0" y1="0" x2="0" y2="1"><stop offset="0" stop-color="#2a86ee"/><stop offset=".5" stop-color="#2fc0a0"/><stop offset=".8" stop-color="#a8d040"/><stop offset="1" stop-color="#f2c81e"/></linearGradient><linearGradient id="cpr" x1="0" y1="0" x2="0" y2="1"><stop offset="0" stop-color="#a862f2"/><stop offset=".5" stop-color="#ee5a98"/><stop offset="1" stop-color="#f98f3c"/></linearGradient>
<linearGradient id="tv1" x1="0" y1="0" x2="1" y2="1"><stop offset="0" stop-color="#ffffff"/><stop offset="1" stop-color="#c8ccd2"/></linearGradient>
<linearGradient id="ma1" x1="0" y1="0" x2="1" y2="1"><stop offset="0" stop-color="#1a6ae0"/><stop offset=".5" stop-color="#2f8cf8"/><stop offset="1" stop-color="#0f55c8"/></linearGradient>
<linearGradient id="cl1" x1="0" y1="0" x2="1" y2="0"><stop offset="0" stop-color="#9a9ea4"/><stop offset=".5" stop-color="#f4f5f6"/><stop offset="1" stop-color="#a8acb2"/></linearGradient>
</defs>
<!-- weather -->
<path d="M44.700 1151.500V1175.500Q44.700 1178.700 41.500 1178.700Q38.500 1178.700 38.500 1175" fill="none" stroke="#5c6670" stroke-width="2.400" stroke-linecap="round"/>
<path d="M30.300 1166Q31 1156 44.500 1153Q57 1156 58.500 1166Q54 1163.500 49.500 1165.500Q47 1164 44.500 1165.500Q42 1164 39.500 1165.500Q35 1163.500 30.300 1166Z" fill="#4fa8f2"/>
<path d="M30.300 1166Q31 1156 44.500 1153V1165.500Q42 1164 39.500 1165.500Q35 1163.500 30.300 1166Z" fill="#84c4f8"/>
<circle cx="57.500" cy="1149.400" r="12" fill="#d82a1c"/>
<!-- start -->
<g fill="url(#tkw1)"><rect x="434" y="1147.500" width="16.800" height="16.800" rx=".8"/><rect x="452.200" y="1147.500" width="16.800" height="16.800" rx=".8"/><rect x="434" y="1165.700" width="16.800" height="16.800" rx=".8"/><rect x="452.200" y="1165.700" width="16.800" height="16.800" rx=".8"/></g>
<!-- search icon -->
<path d="M524.200 1163.400A8.300 8.300 0 1 1 518.800 1154.200" fill="none" stroke="#1c1c1c" stroke-width="1.900" stroke-linecap="round"/>
<path d="M522.300 1168.300L528.800 1174.800" stroke="#1c1c1c" stroke-width="1.900" stroke-linecap="round"/>
<path d="M522.500 1152.300q.9 3.900 4.700 4.700q-3.800 .8-4.700 4.700q-.9-3.900-4.700-4.700q3.800-.8 4.700-4.700z" fill="#1c1c1c"/>
<path d="M526.600 1161.200q.6 2.600 3.100 3.100q-2.500 .5-3.100 3.100q-.6-2.600-3.100-3.100q2.500-.5 3.100-3.100z" fill="#1c1c1c"/>
<!-- sparkles -->
<path d="M768 1153.5C769.4 1159.3 772.7 1162.6 778.5 1164C772.7 1165.4 769.4 1168.7 768 1174.5C766.6 1168.7 763.3 1165.4 757.5 1164C763.3 1162.6 766.6 1159.3 768 1153.5Z" fill="#f8c41e" stroke="#f8c41e" stroke-width="2.3" stroke-linejoin="round"/>
<path d="M790.5 1162.2C791.2 1165.1 792.9 1166.8 795.8 1167.5C792.9 1168.2 791.2 1169.9 790.5 1172.8C789.8 1169.9 788.1 1168.2 785.2 1167.5C788.1 1166.8 789.8 1165.1 790.5 1162.2Z" fill="#f9cc38" stroke="#f9cc38" stroke-width="1.2" stroke-linejoin="round"/>
<path d="M749 1168.2C749.5 1170.3 750.7 1171.5 752.8 1172C750.7 1172.5 749.5 1173.7 749 1175.8C748.5 1173.7 747.3 1172.5 745.2 1172C747.3 1171.5 748.5 1170.3 749 1168.2Z" fill="#2aa0e8" stroke="#2aa0e8" stroke-width="0.8" stroke-linejoin="round"/>
<circle cx="784" cy="1154.500" r="2.100" fill="#e8553a"/><circle cx="802.500" cy="1174" r="2.100" fill="#8cc83c"/>
<!-- task view -->
<rect x="837" y="1157" width="27" height="23.500" rx="2.500" fill="#2a2a2a"/>
<rect x="846" y="1147.500" width="26.500" height="23.500" rx="2.500" fill="url(#tv1)" opacity=".93"/>
<!-- copilot -->
<path d="M921 1149.500H924.500Q928.500 1149.500 929.500 1153L930.500 1157H923Z" fill="#1b50d2"/>
<path d="M913.500 1171.500L914.500 1175.500Q915.500 1179 919.500 1179H923L920 1171.500Z" fill="#e6472c"/>
<path d="M911.500 1149.500H924Q927.500 1149.500 926.500 1153L922 1168Q921 1172.500 917 1172.500H909.500Q904 1172.500 905 1167L907.500 1154Q908.300 1149.500 911.500 1149.500Z" fill="url(#cpl)"/>
<path d="M926 1156H933.500Q939 1156 938 1161.500L935.500 1174.500Q934.700 1179 931 1179H919Q915.500 1179 916.500 1175.500L921 1160.500Q922 1156 926 1156Z" fill="url(#cpr)"/>
<path d="M924.500 1157.500L919.500 1172" stroke="#f1f3fb" stroke-width="2.600" stroke-linecap="round"/>
<!-- explorer -->
<path d="M968.500 1150Q968.500 1147.500 971 1147.500H979L982 1150.500H1002Q1005 1150.500 1005 1153.500V1177.500Q1005 1180.500 1002 1180.500H971.500Q968.500 1180.500 968.500 1177.500Z" fill="url(#fo1)"/>
<path d="M968.500 1150Q968.500 1147.500 971 1147.500H979L982 1150.500H969Z" fill="#e8a21a"/>
<path d="M975 1172Q975 1168 979 1168H994.500Q998.500 1168 998.500 1172V1180.500H975Z" fill="#1e7fd8"/>
<rect x="980.500" y="1172.500" width="12.500" height="2.600" rx="1.300" fill="#0d4f9a"/>
<!-- edge -->
<circle cx="1052.800" cy="1164.500" r="17.500" fill="url(#ed1)"/>
<path d="M1035.500 1162Q1037 1147.500 1052.800 1147Q1068 1148 1070.300 1162Q1070.500 1170 1062.500 1170.500Q1056 1170.500 1057.500 1165.500Q1059 1161 1054 1158.500Q1046 1157 1043 1164Q1038 1158 1035.500 1162Z" fill="url(#ed2)"/>
<path d="M1044.500 1168.500Q1044 1162 1050.500 1160.500Q1056 1160.500 1056.500 1165.500Q1055 1171 1060 1173.500Q1065 1175 1068.500 1172Q1064 1181 1055 1181.500Q1046 1179 1044.500 1168.500Z" fill="#0d4fa0"/>
<path d="M1046.500 1167Q1047 1162.500 1051 1162Q1054.500 1162.500 1054.500 1166Q1053.500 1170 1057 1172.500Q1050 1174 1046.500 1167Z" fill="#e8f2fa"/>
<!-- store -->
<path d="M1108 1155V1152Q1108 1147.500 1112.500 1147.500H1124.500Q1129 1147.500 1129 1152V1155" fill="none" stroke="#3fb0ec" stroke-width="2.400"/>
<path d="M1100.600 1154.500H1136.600V1176Q1136.600 1182 1130.600 1182H1106.600Q1100.600 1182 1100.600 1176Z" fill="#1a4f8f"/>
<rect x="1110.500" y="1159.500" width="7.500" height="7.500" fill="#f35325"/><rect x="1119.300" y="1159.500" width="7.500" height="7.500" fill="#81bc06"/><rect x="1110.500" y="1168.300" width="7.500" height="7.500" fill="#05a6f0"/><rect x="1119.300" y="1168.300" width="7.500" height="7.500" fill="#ffba08"/>
<!-- MA -->
<rect x="1166.700" y="1146" width="36.500" height="36" fill="url(#ma1)"/>
<path d="M1172.500 1173L1181.500 1155H1185.500L1176.500 1173ZM1180 1173L1189 1155H1192L1183 1173Z" fill="#fff"/>
<path d="M1187 1173L1193.500 1155H1197L1199.500 1173H1196L1195.500 1169.500H1191.500L1190.300 1173ZM1192.500 1166.500H1195.200L1194.700 1160.500Z" fill="#fff"/>
<!-- box3d -->
<path d="M1250.500 1146L1268 1155.500V1173L1250.500 1182L1233 1173V1155.500Z" fill="#dcb88a"/>
<path d="M1250.500 1164.500L1268 1155.500V1173L1250.500 1182Z" fill="#c49a68"/>
<path d="M1250.500 1146L1268 1155.500L1250.500 1164.500L1233 1155.500Z" fill="#ecd2aa"/>
<path d="M1238.500 1160L1245.500 1152L1248 1154.500L1242.500 1162.500Z" fill="#3a3a3a"/><circle cx="1247.500" cy="1150.500" r="1.600" fill="#3a3a3a"/>
<g fill="#5a4630"><circle cx="1255" cy="1168" r="1"/><circle cx="1259" cy="1166" r="1"/><circle cx="1263" cy="1164" r="1"/><circle cx="1255" cy="1172.500" r="1"/><circle cx="1259" cy="1170.500" r="1"/><circle cx="1263" cy="1168.500" r="1"/><circle cx="1255" cy="1177" r="1"/><circle cx="1259" cy="1175" r="1"/><circle cx="1263" cy="1173" r="1"/></g>
<!-- mcafee -->
<path d="M1300 1146L1316.800 1154.500L1333.500 1146V1172.500L1316.800 1181.500L1300 1172.500Z" fill="#d3222a"/>
<path d="M1306.500 1156.500L1316.800 1161.800L1327 1156.500V1169L1316.800 1174.500L1306.500 1169Z" fill="#dfe7f5"/>
<!-- inkscape -->
<path d="M1382.500 1146.500L1399.500 1163.500Q1401 1166 1398 1166.500H1367Q1364 1166 1365.500 1163.500Z" fill="#1a1a1a"/>
<path d="M1382.500 1148.500L1391 1157L1386.500 1160L1382.500 1156L1378.500 1160L1374 1157Z" fill="#f2f2f2"/>
<path d="M1372 1168.500H1393Q1396 1170 1392 1172L1386 1174Q1384 1176 1387 1178Q1389 1181 1383 1182Q1377 1181.500 1378 1178.500Q1381 1176 1376 1174.500L1371 1172Q1368.500 1170 1372 1168.500Z" fill="#1a1a1a"/>
<circle cx="1396.500" cy="1175" r="1.800" fill="#1a1a1a"/><circle cx="1369.500" cy="1175.500" r="1.400" fill="#1a1a1a"/>
<!-- sheetcam -->
<g transform="rotate(-42 1448.500 1164)"><rect x="1428" y="1158" width="41" height="12" fill="#3c3c3c"/><path d="M1428 1161h41" stroke="#8a8a8a" stroke-width="2"/><path d="M1433 1170l6.500-12M1443 1170l6.500-12M1453 1170l6.500-12" stroke="#a4a4a4" stroke-width="2.400"/><path d="M1463 1170l6-7" stroke="#a4a4a4" stroke-width="2"/></g>
<!-- tray -->
<path d="M1585.500 1167.500L1593 1160L1600.500 1167.500" fill="none" stroke="#1c1c1c" stroke-width="1.800" stroke-linecap="round" stroke-linejoin="round"/>
<path d="M1635.500 1171Q1629.500 1171 1629.500 1165.500Q1629.500 1161 1634 1160.300Q1636 1155.500 1641.500 1155.500Q1647 1155.500 1648.500 1161Q1653 1161.500 1653 1166Q1653 1171 1648 1171Z" fill="url(#cl1)" stroke="#1c1c1c" stroke-width="1.600"/>
<g fill="none" stroke="#1c1c1c" stroke-width="1.800" stroke-linecap="round"><path d="M1677.500 1161.500Q1689 1151 1700.500 1161.500"/><path d="M1681.500 1165.500Q1689 1158.500 1696.500 1165.500"/><path d="M1685.300 1169.300Q1689 1166 1692.700 1169.300"/></g><circle cx="1689" cy="1171.500" r="1.500" fill="#1c1c1c"/>
<path d="M1713.500 1160.500H1717.500L1722.500 1155.500V1172L1717.500 1167H1713.500Z" fill="none" stroke="#1c1c1c" stroke-width="1.600" stroke-linejoin="round"/>
<g fill="none" stroke="#1c1c1c" stroke-width="1.600" stroke-linecap="round"><path d="M1726 1160.500Q1728.500 1163.700 1726 1167"/><path d="M1729.500 1157.500Q1734 1163.700 1729.500 1170"/><path d="M1733 1154.500Q1739.500 1163.700 1733 1173"/></g>
<rect x="1751.500" y="1156.500" width="19" height="13.500" rx="3" fill="none" stroke="#1c1c1c" stroke-width="1.600"/><rect x="1754.300" y="1159.300" width="13.400" height="8" rx="1.300" fill="#1c1c1c"/><path d="M1771.500 1161v4.500" stroke="#1c1c1c" stroke-width="2.200" stroke-linecap="round"/>
<path d="M1756 1152L1750.500 1161.500H1754.500L1752.500 1168" fill="none" stroke="#e4ecf8" stroke-width="4" stroke-linejoin="round"/><path d="M1756 1152L1750.500 1161.500H1754.500L1752.500 1168" fill="none" stroke="#1c1c1c" stroke-width="1.500" stroke-linejoin="round"/>
</svg>
<!-- texts -->
<span class="t" style="left:34.0px;top:9.0px;font-size:18px;color:#858585;transform:scaleX(0.9782)">SheetCam TNG Integration - C:\Users\willh\OneDrive\Documents\CNC Plasma Files\Job Files\ODonnell Sign 46x66 FINAL.job</span>
<span class="t" style="left:11.0px;top:42.0px;font-size:17.6px;color:#6b6b6b;transform:scaleX(0.9344)">File</span>
<span class="t" style="left:59.0px;top:42.0px;font-size:17.6px;color:#6b6b6b;transform:scaleX(0.9562)">Edit</span>
<span class="t" style="left:110.0px;top:42.0px;font-size:17.6px;color:#6b6b6b;transform:scaleX(0.9649)">View</span>
<span class="t" style="left:169.0px;top:42.0px;font-size:17.6px;color:#6b6b6b;transform:scaleX(0.9981)">Tools</span>
<span class="t" style="left:231.5px;top:42.0px;font-size:17.6px;color:#6b6b6b;transform:scaleX(1.0160)">Operation</span>
<span class="t" style="left:332.0px;top:42.0px;font-size:17.6px;color:#6b6b6b;transform:scaleX(1.0448)">Zoom</span>
<span class="t" style="left:401.5px;top:42.0px;font-size:17.6px;color:#6b6b6b;transform:scaleX(1.0337)">Mode</span>
<span class="t" style="left:468.5px;top:42.0px;font-size:17.6px;color:#6b6b6b;transform:scaleX(1.0307)">Options</span>
<span class="t" style="left:552.5px;top:42.0px;font-size:17.6px;color:#6b6b6b;transform:scaleX(1.0141)">Nesting</span>
<span class="t" style="left:635.0px;top:42.0px;font-size:17.6px;color:#6b6b6b;transform:scaleX(0.9420)">CAD</span>
<span class="t" style="left:692.5px;top:42.0px;font-size:17.6px;color:#6b6b6b;transform:scaleX(0.9962)">Plugins</span>
<span class="t" style="left:771.5px;top:42.0px;font-size:17.6px;color:#6b6b6b;transform:scaleX(1.0225)">Help</span>
<span class="t" style="left:6.3px;top:148.0px;font-size:15.8px;color:#1a1a1a;transform:scaleX(0.9953)">Parts</span>
<span class="t" style="left:5.8px;top:466.0px;font-size:15.8px;color:#1a1a1a;transform:scaleX(1.0572)">Tools</span>
<span class="t" style="left:6.5px;top:786.0px;font-size:15.8px;color:#1a1a1a;transform:scaleX(1.0222)">Operations</span>
<span class="t" style="left:71.0px;top:177.0px;font-size:18px;color:#1a1a1a;transform:scaleX(0.9172)">Sign 46x66 FINAL</span>
<span class="t" style="left:54.0px;top:498.0px;font-size:17.6px;color:#111;transform:scaleX(0.9480)">T1: 12 Gauge</span>
<span class="t" style="left:54.0px;top:526.0px;font-size:17.6px;color:#111;transform:scaleX(0.9663)">T2: 12 Gauge Small Holes</span>
<span class="t" style="left:54.0px;top:555.0px;font-size:17.6px;color:#111;transform:scaleX(0.9480)">T3: 14 Gauge</span>
<span class="t" style="left:77.5px;top:816.0px;font-size:18px;color:#fff;transform:scaleX(0.9341)">Inside Offset, HOLES, T3: 14 Gauge</span>
<span class="t" style="left:77.5px;top:846.0px;font-size:17.6px;color:#111;transform:scaleX(0.9665)">Inside Offset, SMALL, T3: 14 Gauge</span>
<span class="t" style="left:77.5px;top:875.0px;font-size:17.6px;color:#111;transform:scaleX(0.9726)">Inside Offset, MEDIUM, T3: 14 Gauge</span>
<span class="t" style="left:77.5px;top:903.0px;font-size:17.6px;color:#111;transform:scaleX(0.9494)">Inside Offset, LARGE, T3: 14 Gauge</span>
<span class="t" style="left:77.5px;top:932.0px;font-size:17.6px;color:#111;transform:scaleX(0.9569)">Outside Offset, OUTSIDE, T3: 14 Gauge</span>
<span class="t" style="left:4.0px;top:1106.0px;font-size:17.6px;color:#111;transform:scaleX(0.9580)">Cut distance 1640.5371 in , 101 Pierces, Time 1378.02 s</span>
<span class="t" style="left:822.7px;top:1104.0px;font-size:17.6px;color:#111;transform:scaleX(0.9398)">X 10.9894 in, Y 35.7716 in</span>
<span class="t" style="left:1096.0px;top:1104.0px;font-size:17.6px;color:#111;transform:scaleX(0.9115)">Pos X</span>
<span class="t" style="left:1150.7px;top:1104.0px;font-size:17.6px;color:#111;transform:scaleX(0.9433)">0.1566 in</span>
<span class="t" style="left:1317.8px;top:1104.0px;font-size:17.6px;color:#111;transform:scaleX(0.8170)">Y</span>
<span class="t" style="left:1340.0px;top:1104.0px;font-size:17.6px;color:#111;transform:scaleX(0.9502)">0.0402 in</span>
<span class="t" style="left:1506.6px;top:1104.0px;font-size:17.6px;color:#111;transform:scaleX(1.0553)">A</span>
<span class="t" style="left:1530.0px;top:1104.0px;font-size:17.6px;color:#111;transform:scaleX(0.9584)">-90 degrees</span>
<span class="t" style="left:1696.5px;top:1104.0px;font-size:17.6px;color:#111;transform:scaleX(1.0150)">Mirror X</span>
<span class="t" style="left:1795.6px;top:1104.0px;font-size:17.6px;color:#111;transform:scaleX(0.8255)">Y</span>
<span class="t" style="left:76.0px;top:1143.0px;font-size:18px;color:#1c1c1c;transform:scaleX(0.9680)">Rainy days ahead</span>
<span class="t" style="left:77.0px;top:1167.0px;font-size:18px;color:#5c5c5c;transform:scaleX(0.8896)">44°F</span>
<span class="t" style="left:545.5px;top:1155.0px;font-size:20.5px;color:#5c6168;transform:scaleX(0.9235)">Search</span>
<span class="t" style="left:1826.0px;top:1144.0px;font-size:17.5px;color:#1c1c1c;transform:scaleX(0.9895)">9:14 PM</span>
<span class="t" style="left:1798.6px;top:1168.0px;font-size:17.5px;color:#1c1c1c;transform:scaleX(1.0649)">11/21/2025</span>
<span class="t" style="left:53.4px;top:1141.0px;font-size:16.5px;color:#fff;transform:scaleX(1.0014)">2</span>
<!-- dialog -->
<div class="abs" style="left:434px;top:351px;width:1051px;height:416px;border-radius:9px;background:#f0f0f0;border:1px solid #aeb1b7;box-shadow:0 14px 64px rgba(0,0,0,.40),0 0 16px rgba(0,0,0,.16);overflow:hidden;z-index:20">
<div class="abs" style="left:0;top:0;width:1051px;height:45px;background:#eef3f9"></div>
<div class="abs" style="left:1px;top:45px;width:1049px;height:282px;background:#fff;border-top:1px solid #8f9399;border-bottom:1px solid #a3a3a3"></div>
<div class="abs" style="left:10.500px;top:170px;width:252px;height:29px;background:#fe0000"></div>
<div class="abs" style="left:10.500px;top:198px;width:182px;height:29px;background:#fe0000"></div>
<div class="abs" style="left:11px;top:229px;width:2.500px;height:21px;background:#000"></div>
<div class="abs" style="left:471px;top:342px;width:109px;height:30px;background:#fdfdfd;border:1px solid #d2d2d2;border-bottom-color:#bdbdbd;border-radius:5px"></div>
<div class="abs" style="left:12.500px;top:383px;width:19px;height:19px;background:#fcfcfc;border:1px solid #5e5e5e;border-radius:4px"></div>
<svg class="abs" style="left:1017px;top:14px" width="18" height="18" viewBox="0 0 18 18"><path d="M1.500 1.500L16.500 16.500M16.500 1.500L1.500 16.500" stroke="#111" stroke-width="1.400" fill="none"/></svg>
<svg class="abs" style="left:1034px;top:400px" width="12" height="12" viewBox="0 0 12 12" fill="#b8b8b8"><rect x="9" y="1" width="2" height="2"/><rect x="5" y="5" width="2" height="2"/><rect x="9" y="5" width="2" height="2"/><rect x="1" y="9" width="2" height="2"/><rect x="5" y="9" width="2" height="2"/><rect x="9" y="9" width="2" height="2"/></svg>
</div>
<!-- dialog texts -->
<span class="t" style="left:447.5px;top:365.0px;font-size:18px;color:#000;transform:scaleX(0.9863);z-index:30">Running post processor</span>
<span class="t" style="left:445.8px;top:411.0px;font-size:17.6px;color:#111;transform:scaleX(0.9811);z-index:30">Post processing...</span>
<span class="t" style="left:445.8px;top:440.0px;font-size:17.6px;color:#111;transform:scaleX(0.9458);z-index:30">Part:Sign 46x66 FINAL</span>
<span class="t" style="left:445.7px;top:469.0px;font-size:17.6px;color:#111;transform:scaleX(0.9589);z-index:30">Inside Offset, HOLES, T3: 14 Gauge</span>
<span class="t" style="left:445.7px;top:498.0px;font-size:17.6px;color:#111;transform:scaleX(0.9718);z-index:30">Inside Offset, SMALL, T3: 14 Gauge</span>
<span class="t" style="left:446.5px;top:525.0px;font-size:18px;color:#fff;transform:scaleX(0.9501);font-weight:bold;z-index:30">Error: Evaluation limit reached</span>
<span class="t" style="left:446.5px;top:553.0px;font-size:18px;color:#fff;transform:scaleX(0.9320);font-weight:bold;z-index:30">Post processing failed</span>
<span class="t" style="left:948.0px;top:701.0px;font-size:17.6px;color:#000;transform:scaleX(0.9047);z-index:30">OK</span>
<span class="t" style="left:472.0px;top:736.0px;font-size:18px;color:#111;transform:scaleX(1.0049);z-index:30">Automatically hide me if there are no problems</span>
</body></html>
